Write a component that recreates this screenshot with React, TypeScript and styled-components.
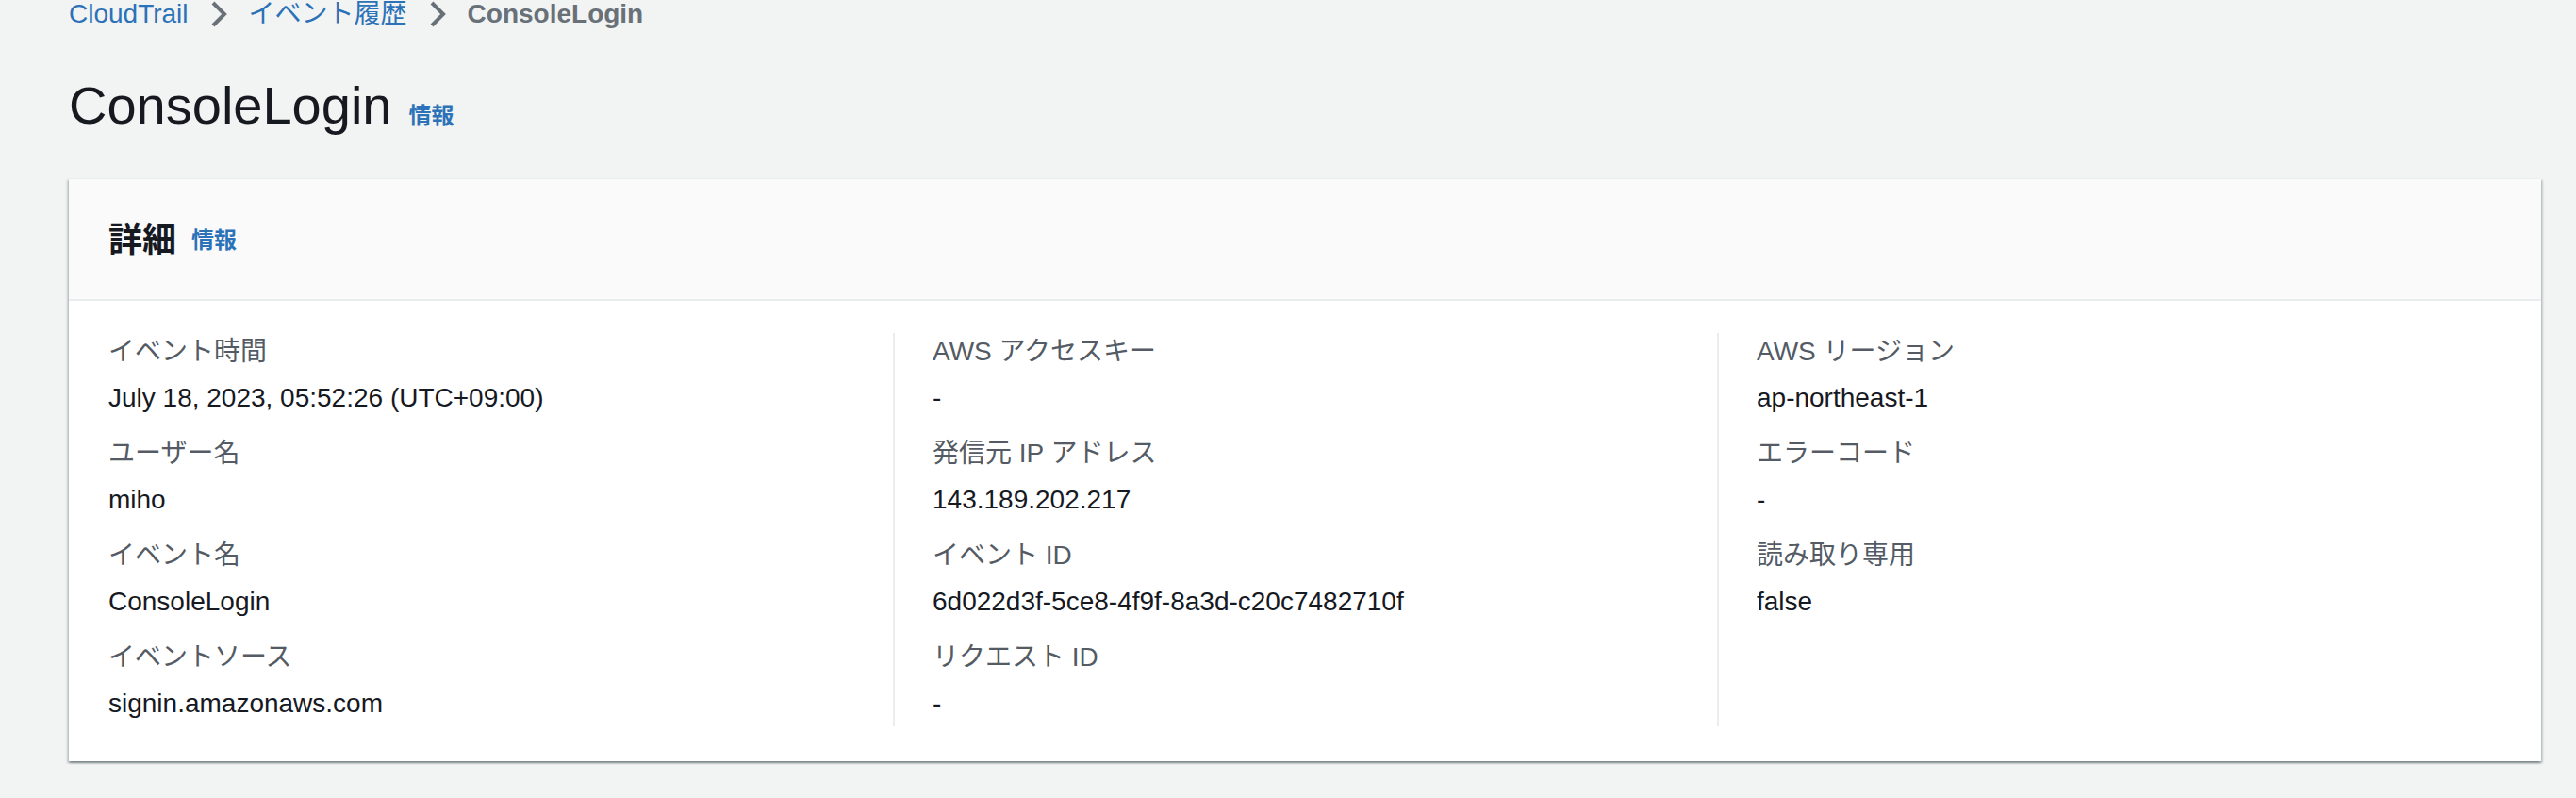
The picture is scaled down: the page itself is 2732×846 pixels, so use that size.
import React from "react";
import styled, { createGlobalStyle } from "styled-components";

const GlobalStyle = createGlobalStyle`
  html, body {
    margin: 0;
    padding: 0;
    background: #f2f3f3;
  }
  body {
    font-family: "Liberation Sans", "Noto Sans CJK JP", Arial, sans-serif;
    color: #16191f;
    overflow: hidden;
  }
  * { box-sizing: border-box; }
`;

const LINK = "#2b72b8";

const Page = styled.main`
  padding: 0 37px 40px 73px;
`;

const Breadcrumbs = styled.nav`
  display: flex;
  align-items: center;
  height: 40px;
  margin-top: -5px;
  font-size: 28px;
  line-height: 40px;
`;

const Crumb = styled.a<{ $current?: boolean }>`
  color: ${(p) => (p.$current ? "#687078" : LINK)};
  font-weight: ${(p) => (p.$current ? 700 : 400)};
  text-decoration: none;
  white-space: nowrap;
`;

const Chevron = styled.svg`
  width: 32px;
  height: 32px;
  margin: 0 16px;
  flex: none;
  stroke: #687078;
  stroke-width: 2;
  fill: none;
`;

const TitleRow = styled.div`
  display: flex;
  align-items: baseline;
  margin-top: 37px;
  height: 80px;
`;

const Title = styled.h1`
  margin: 0;
  font-size: 56px;
  font-weight: 400;
  line-height: 80px;
  color: #16191f;
`;

const InfoLink = styled.a<{ $gap: number }>`
  margin-left: ${(p) => p.$gap}px;
  font-size: 24px;
  font-weight: 700;
  color: ${LINK};
  text-decoration: none;
  line-height: 32px;
`;

const Card = styled.section`
  margin-top: 37px;
  background: #ffffff;
  border-top: 1px solid #eaeded;
  box-shadow: 0 2px 2px 0 rgba(0, 28, 36, 0.3),
    2px 2px 2px 0 rgba(0, 28, 36, 0.15),
    -2px 2px 2px 0 rgba(0, 28, 36, 0.15);
`;

const CardHeader = styled.header`
  display: flex;
  align-items: center;
  height: 129px;
  padding: 2px 42px 0;
  background: #fafafa;
  border-bottom: 2px solid #eaeded;
`;

const CardTitle = styled.h2`
  margin: 0;
  font-size: 36px;
  font-weight: 700;
  line-height: 44px;
  color: #16191f;
`;

const CardBody = styled.div`
  display: grid;
  grid-template-columns: repeat(3, 1fr);
  padding: 34px 0 37px;
`;

const Column = styled.div<{ $divider?: boolean }>`
  display: flex;
  flex-direction: column;
  gap: 19px;
  padding: 0 40px 4px ${(p) => (p.$divider ? 40 : 42)}px;
  border-left: ${(p) => (p.$divider ? "2px solid #eaeded" : "none")};
`;

const Field = styled.div`
  display: flex;
  flex-direction: column;
  gap: 9px;
`;

const Label = styled.div`
  font-size: 28px;
  line-height: 40px;
  color: #545b64;
`;

const Value = styled.div`
  font-size: 28px;
  line-height: 40px;
  color: #16191f;
`;

type Item = { label: string; value: string };

const columns: Item[][] = [
  [
    { label: "イベント時間", value: "July 18, 2023, 05:52:26 (UTC+09:00)" },
    { label: "ユーザー名", value: "miho" },
    { label: "イベント名", value: "ConsoleLogin" },
    { label: "イベントソース", value: "signin.amazonaws.com" },
  ],
  [
    { label: "AWS アクセスキー", value: "-" },
    { label: "発信元 IP アドレス", value: "143.189.202.217" },
    { label: "イベント ID", value: "6d022d3f-5ce8-4f9f-8a3d-c20c7482710f" },
    { label: "リクエスト ID", value: "-" },
  ],
  [
    { label: "AWS リージョン", value: "ap-northeast-1" },
    { label: "エラーコード", value: "-" },
    { label: "読み取り専用", value: "false" },
  ],
];

const ChevronIcon = () => (
  <Chevron viewBox="0 0 16 16" aria-hidden="true">
    <path d="M5 2l6 6-6 6" />
  </Chevron>
);

export default function App() {
  return (
    <>
      <GlobalStyle />
      <Page>
        <Breadcrumbs aria-label="Breadcrumbs">
          <Crumb href="#">CloudTrail</Crumb>
          <ChevronIcon />
          <Crumb href="#">イベント履歴</Crumb>
          <ChevronIcon />
          <Crumb $current>ConsoleLogin</Crumb>
        </Breadcrumbs>
        <TitleRow>
          <Title>ConsoleLogin</Title>
          <InfoLink href="#" $gap={18}>情報</InfoLink>
        </TitleRow>
        <Card>
          <CardHeader>
            <CardTitle>詳細</CardTitle>
            <InfoLink href="#" $gap={16}>情報</InfoLink>
          </CardHeader>
          <CardBody>
            {columns.map((col, i) => (
              <Column key={i} $divider={i > 0}>
                {col.map((it) => (
                  <Field key={it.label}>
                    <Label>{it.label}</Label>
                    <Value>{it.value}</Value>
                  </Field>
                ))}
              </Column>
            ))}
          </CardBody>
        </Card>
      </Page>
    </>
  );
}
